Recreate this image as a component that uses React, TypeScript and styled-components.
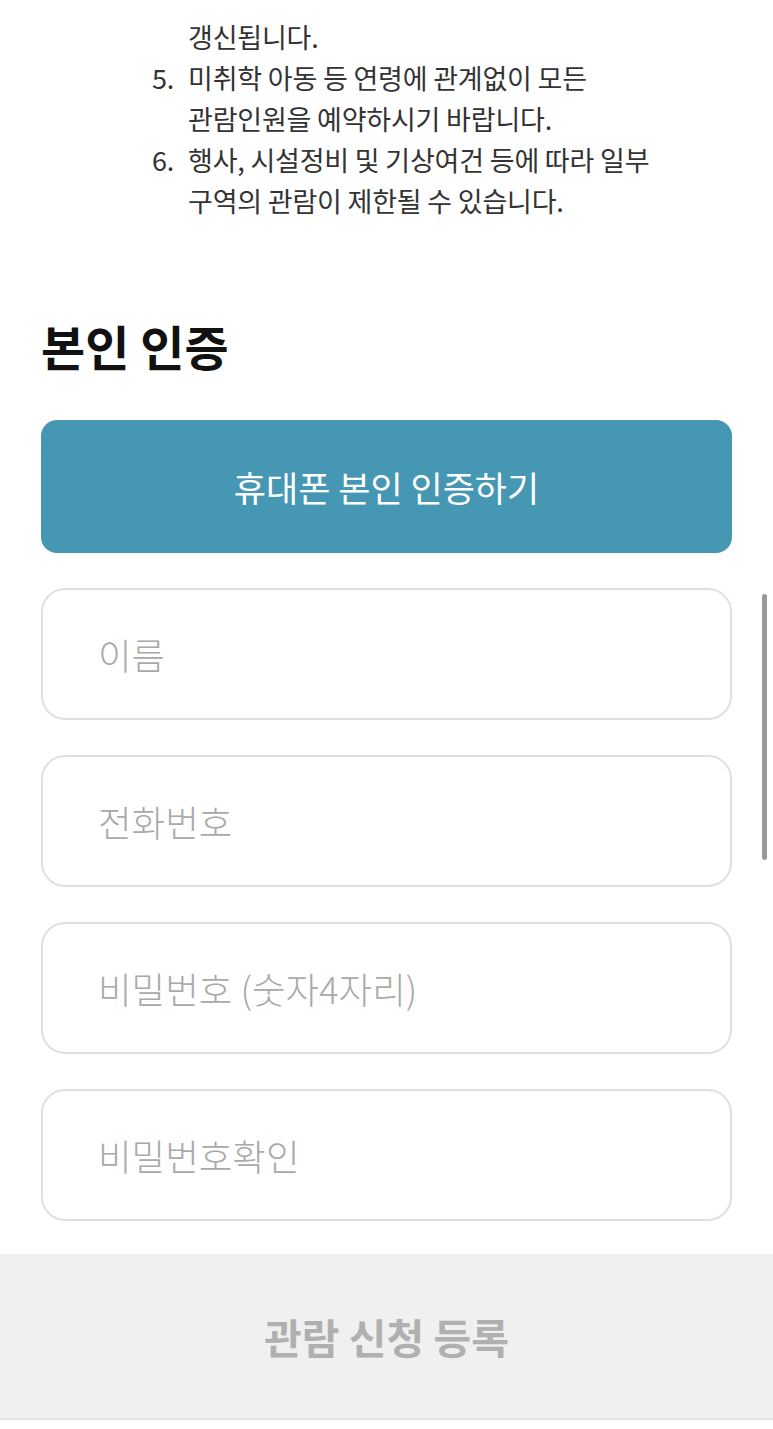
import React from "react"
import styled, { createGlobalStyle } from "styled-components"

const GlobalStyle = createGlobalStyle`
  html, body {
    margin: 0;
    padding: 0;
    background: #ffffff;
  }
  body {
    font-family: "Noto Sans CJK KR", "Noto Sans", sans-serif;
    color: #222;
  }
  * {
    box-sizing: border-box;
  }
`

const notices = [
  { num: "", lines: ["갱신됩니다."] },
  { num: "5.", lines: ["미취학 아동 등 연령에 관계없이 모든", "관람인원을 예약하시기 바랍니다."] },
  { num: "6.", lines: ["행사, 시설정비 및 기상여건 등에 따라 일부", "구역의 관람이 제한될 수 있습니다."] },
]

const fields = ["이름", "전화번호", "비밀번호 (숫자4자리)", "비밀번호확인"]

const App: React.FC = () => {
  return (
    <Page>
      <GlobalStyle />
      <NoticeList>
        {notices.map((item, key) => (
          <NoticeItem key={key}>
            <NoticeNum>{item.num}</NoticeNum>
            <NoticeText>
              {item.lines.map((line, i) => (
                <div key={i}>{line}</div>
              ))}
            </NoticeText>
          </NoticeItem>
        ))}
      </NoticeList>

      <AuthSection>
        <Title>본인 인증</Title>
        <AuthButton type="button">휴대폰 본인 인증하기</AuthButton>
        <FieldList>
          {fields.map((placeholder, key) => (
            <Field key={key}>
              <FieldInput type="text" placeholder={placeholder} />
            </Field>
          ))}
        </FieldList>
      </AuthSection>

      <SubmitBar type="button">관람 신청 등록</SubmitBar>
      <Scrollbar />
    </Page>
  )
}

const Page = styled.div`
  position: relative;
  width: 773px;
  height: 1429px;
  overflow: hidden;
  background: #fff;
`

const NoticeList = styled.div`
  display: flex;
  flex-direction: column;
  padding: 16px 0 0 152px;
`

const NoticeItem = styled.div`
  display: flex;
  font-size: 27px;
  line-height: 41px;
  color: #333;
  letter-spacing: -0.2px;
`

const NoticeNum = styled.div`
  width: 36px;
  flex: none;
`

const NoticeText = styled.div`
  display: flex;
  flex-direction: column;
`

const AuthSection = styled.div`
  display: flex;
  flex-direction: column;
  padding: 0 41px;
`

const Title = styled.h2`
  margin: 94px 0 0;
  font-size: 48px;
  line-height: 60px;
  font-weight: 700;
  color: #111;
`

const AuthButton = styled.button`
  margin-top: 45px;
  height: 133px;
  border: none;
  border-radius: 16px;
  background: #4697b3;
  color: #fff;
  font-family: inherit;
  font-size: 35px;
  font-weight: 400;
`

const FieldList = styled.div`
  display: flex;
  flex-direction: column;
  gap: 35px;
  margin-top: 35px;
`

const Field = styled.div`
  height: 132px;
  border: 2px solid #e0e0e0;
  border-radius: 24px;
  display: flex;
  align-items: center;
  padding: 0 55px;
`

const FieldInput = styled.input`
  width: 100%;
  border: none;
  outline: none;
  background: transparent;
  font-family: inherit;
  font-size: 36.5px;
  font-weight: 300;
  color: #333;
  padding: 0;
  &::placeholder {
    color: #a9a9a9;
  }
`

const SubmitBar = styled.button`
  display: block;
  width: 100%;
  margin-top: 33px;
  height: 166px;
  border: none;
  border-bottom: 2px solid #e4e4e8;
  background: #f0f0f1;
  color: #b0b0b0;
  font-family: inherit;
  font-size: 41px;
  font-weight: 700;
`

const Scrollbar = styled.div`
  position: absolute;
  left: 762px;
  top: 594px;
  width: 5px;
  height: 266px;
  border-radius: 3px;
  background: #9a9a9a;
`

export default App
